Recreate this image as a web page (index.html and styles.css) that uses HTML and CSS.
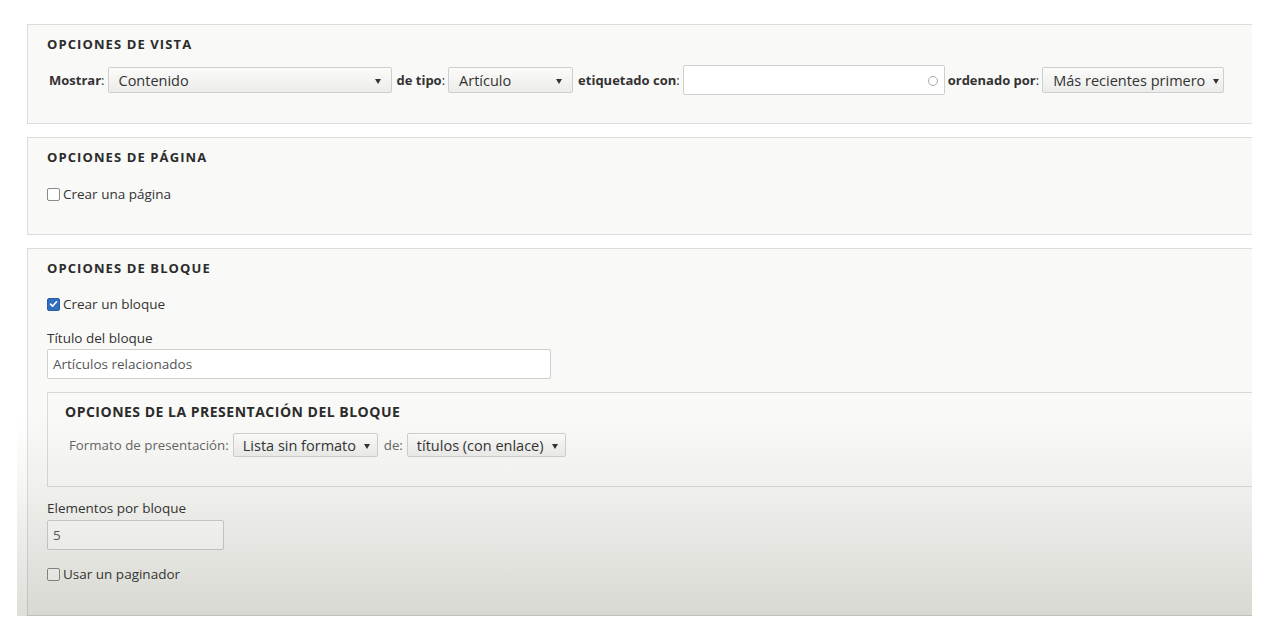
FILE: index.html
```html
<!DOCTYPE html>
<html lang="es">
<head>
<meta charset="utf-8">
<title>Opciones</title>
<link rel="stylesheet" href="styles.css">
</head>
<body>
<div class="frame">
  <section class="box box-vista">
    <h2 class="legend">Opciones de vista</h2>
    <div class="row">
      <span class="lbl">Mostrar<span class="colon">:</span></span>
      <div class="select sel-contenido"><span>Contenido</span><i class="arrow"></i></div>
      <span class="lbl">de tipo<span class="colon">:</span></span>
      <div class="select sel-articulo"><span>Artículo</span><i class="arrow"></i></div>
      <span class="lbl">etiquetado con<span class="colon">:</span></span>
      <div class="text-input inp-tags"><span class="throbber"></span></div>
      <span class="lbl">ordenado por<span class="colon">:</span></span>
      <div class="select sel-orden"><span>Más recientes primero</span><i class="arrow"></i></div>
    </div>
  </section>

  <section class="box box-pagina">
    <h2 class="legend">Opciones de página</h2>
    <div class="check-row"><span class="checkbox"></span><span>Crear una página</span></div>
  </section>

  <section class="box box-bloque">
    <h2 class="legend">Opciones de bloque</h2>
    <div class="check-row first-check">
      <span class="checkbox checked"><svg viewBox="0 0 12 12" width="12" height="12"><path d="M2.8 6.2 L5 8.4 L9.3 3.6" fill="none" stroke="#fff" stroke-width="1.8" stroke-linecap="round" stroke-linejoin="round"/></svg></span>
      <span>Crear un bloque</span>
    </div>
    <div class="field-label">Título del bloque</div>
    <div class="text-input inp-titulo"><span class="val">Artículos relacionados</span></div>

    <section class="inner">
      <h3 class="inner-legend">Opciones de la presentación del bloque</h3>
      <div class="row inner-row">
        <span class="lbl-light">Formato de presentación<span class="colon">:</span></span>
        <div class="select small sel-lista"><span>Lista sin formato</span><i class="arrow"></i></div>
        <span class="lbl-light">de:</span>
        <div class="select small sel-titulos"><span>títulos (con enlace)</span><i class="arrow"></i></div>
      </div>
    </section>

    <div class="field-label lbl-elementos">Elementos por bloque</div>
    <div class="text-input inp-num"><span class="val">5</span></div>
    <div class="check-row last-check"><span class="checkbox"></span><span>Usar un paginador</span></div>
  </section>
  <div class="shade"></div>
</div>
</body>
</html>
```

FILE: styles.css
```css
* { box-sizing: border-box; }
html, body { margin: 0; padding: 0; background: #fff; }
body {
  font-family: "Open Sans", "Noto Sans", sans-serif;
  font-size: 13.5px;
  color: #333;
}
.frame {
  position: relative;
  margin-left: 17px;
  width: 1235px;
  height: 616px;
  padding-top: 24px;
  overflow: hidden;
  background: #fff;
}
.box {
  margin-left: 10px;
  width: 1260px;
  border: 1px solid #dcdcda;
  background: #f9f9f7;
  padding: 11px 19px 0;
}
.box + .box { margin-top: 13px; }
.box-vista { height: 100px; }
.box-pagina { height: 98px; }
.box-bloque { height: 368px; }

.legend {
  margin: 0;
  font-size: 13px;
  line-height: 16px;
  font-weight: 700;
  text-transform: uppercase;
  letter-spacing: 1.1px;
  color: #2b2b2b;
}
.row {
  display: flex;
  align-items: center;
  height: 30px;
  margin-top: 13px;
  margin-left: 2px;
}
.lbl {
  font-weight: 700;
  font-size: 13px;
  color: #333;
  white-space: nowrap;
}
.colon { font-weight: 400; }
.lbl + .select, .lbl + .text-input { margin-left: 3px; }
.select + .lbl { margin-left: 5px; }
.text-input + .lbl { margin-left: 3px; }

.select {
  display: flex;
  align-items: center;
  justify-content: space-between;
  height: 26px;
  padding: 0 10px 0 10px;
  border: 1px solid #cfcfcd;
  border-radius: 2px;
  background: linear-gradient(#fbfbfa, #ececea);
  font-size: 14.5px;
  color: #333;
  white-space: nowrap;
}
.select.small { height: 24px; padding: 0 9px 0 9px; }
.arrow {
  width: 0; height: 0;
  border-left: 3.5px solid transparent;
  border-right: 3.5px solid transparent;
  border-top: 5px solid #333;
  margin-left: 8px;
  margin-top: 2px;
}
.sel-contenido { width: 284px; }
.sel-articulo { width: 125px; }
.sel-orden { width: 182px; }

.text-input {
  position: relative;
  height: 30px;
  border: 1px solid #cfcfcd;
  border-radius: 2px;
  background: #fff;
  display: flex;
  align-items: center;
  padding: 0 5px;
}
.inp-tags { width: 262px; }
.throbber {
  position: absolute;
  right: 6px;
  top: 10px;
  width: 10px; height: 10px;
  border: 1px solid #aaa;
  border-radius: 50%;
}
.val { color: #555; font-size: 13.5px; }

.check-row {
  display: flex;
  align-items: center;
  height: 16px;
  margin-top: 21px;
  color: #333;
}
.checkbox {
  display: inline-flex;
  align-items: center;
  justify-content: center;
  width: 13px; height: 13px;
  border: 1px solid #8a8a8a;
  border-radius: 2px;
  background: #fff;
  margin-right: 3px;
}
.checkbox.checked {
  background: #2f6ec0;
  border-color: #2a5fa8;
}
.checkbox svg { display: block; }
.first-check { margin-top: 20px; }

.field-label { margin-top: 18px; line-height: 16px; color: #333; }
.inp-titulo { width: 504px; margin-top: 3px; }

.inner {
  margin-top: 13px;
  width: 1240px;
  height: 95px;
  border: 1px solid #d9d9d7;
  background: transparent;
  padding: 10px 17px 0;
}
.inner-legend {
  margin: 0;
  font-size: 14px;
  line-height: 18px;
  font-weight: 700;
  text-transform: uppercase;
  letter-spacing: 0.5px;
  color: #2b2b2b;
}
.inner-row {
  margin-top: 12px;
  height: 24px;
  margin-left: 4px;
}
.lbl-light { color: #666; white-space: nowrap; font-size: 13.3px; }
.lbl-light + .select { margin-left: 4px; }
.select + .lbl-light { margin-left: 6px; }
.sel-lista { width: 145px; }
.sel-titulos { width: 159px; }

.lbl-elementos { margin-top: 13px; }
.inp-num { width: 177px; margin-top: 4px; }
.last-check { margin-top: 16px; }

.shade {
  position: absolute;
  left: 0; right: 0; bottom: 0;
  height: 200px;
  background: linear-gradient(rgba(70,70,50,0), rgba(70,70,50,0.05) 35%, rgba(70,70,50,0.18));
  pointer-events: none;
}
```
